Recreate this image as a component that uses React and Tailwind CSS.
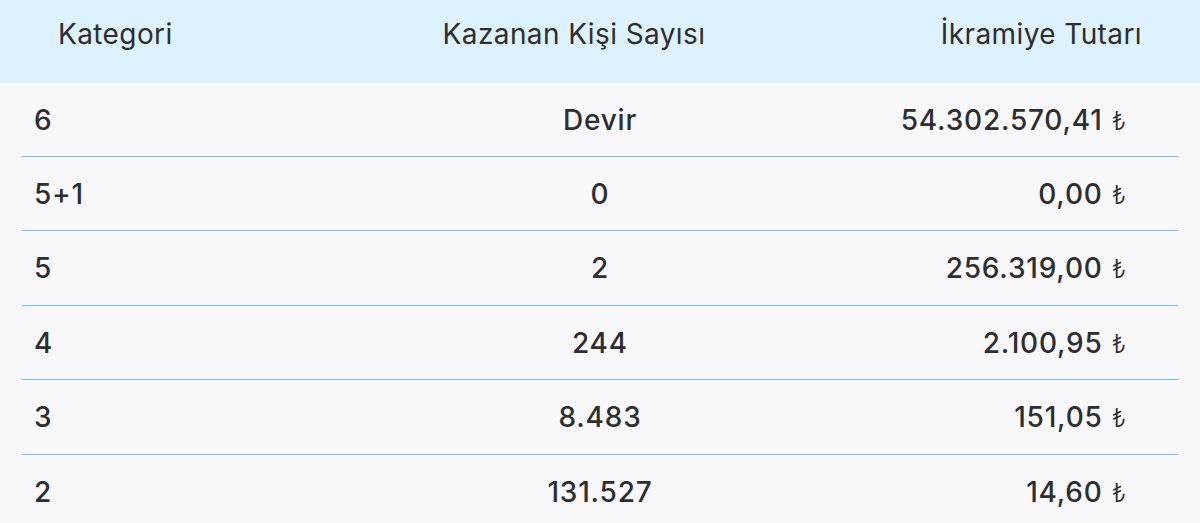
const rows = [
  ['6', 'Devir', '54.302.570,41', 'h-[74px]'],
  ['5+1', '0', '0,00', 'h-[74px]'],
  ['5', '2', '256.319,00', 'h-[75px]'],
  ['4', '244', '2.100,95', 'h-[74px]'],
  ['3', '8.483', '151,05', 'h-[75px]'],
  ['2', '131.527', '14,60', 'h-[74px]'],
];

const App = () => {
  return (
    <div className="w-[1200px] h-[523px] overflow-hidden bg-[#f8f8fa] text-[#2e2e30] font-['Inter','Noto_Sans',sans-serif]">
      {/* header */}
      <div className="h-[83px] bg-[#ddf2fc] grid grid-cols-[342px_348px_1fr] pl-[58px] pr-[58px] pt-[14px] text-[28px] tracking-[0.4px] leading-[40px]">
        <div className="text-left">Kategori</div>
        <div className="text-center">Kazanan Kişi Sayısı</div>
        <div className="text-right">İkramiye Tutarı</div>
      </div>

      {/* body */}
      <div className="mx-[22px]">
        {rows.map((r, i) => (
          <div
            key={i}
            className={`grid grid-cols-3 items-center px-[12px] text-[28px] font-medium tracking-[0.8px] ${r[3]} ${
              i < rows.length - 1 ? 'border-b border-b-[#74c0e4]' : ''
            }`}
          >
            <div className="text-left">{r[0]}</div>
            <div className="text-center">{r[1]}</div>
            <div className="text-right pr-[40px]">
              {r[2]}
              <span className="ml-[9px] text-[25px] font-light tracking-normal">₺</span>
            </div>
          </div>
        ))}
      </div>
    </div>
  );
};

export default App;
